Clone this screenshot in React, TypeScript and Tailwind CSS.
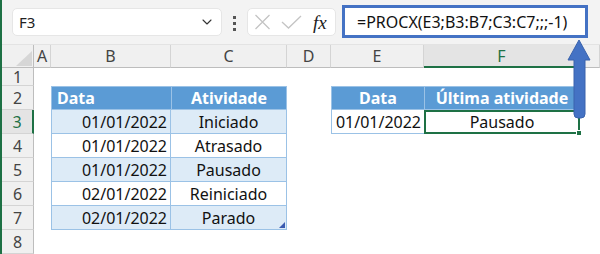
import { ChevronDown } from 'lucide-react';

const font = { fontFamily: '"Noto Sans", "Open Sans", sans-serif' };

const cols = ['A', 'B', 'C', 'D', 'E', 'F', ''];

const rows1 = [
  { date: '01/01/2022', act: 'Iniciado' },
  { date: '01/01/2022', act: 'Atrasado' },
  { date: '01/01/2022', act: 'Pausado' },
  { date: '02/01/2022', act: 'Reiniciado' },
  { date: '02/01/2022', act: 'Parado' },
];

const ColHead = ({ label }: { label: string }) => {
  const sel = label === 'F';
  return (
    <div
      className={
        'flex items-center justify-center border-r border-[#d4d4d4] text-[16px] ' +
        (sel
          ? 'bg-[#e4e4e4] text-[#1e7145] border-b-2 border-b-[#1e7145]'
          : 'bg-[#f0f0f0] text-[#444] border-b border-b-[#bdbdbd]')
      }
    >
      {label}
    </div>
  );
};

const RowHead = ({ n }: { n: number }) => {
  const sel = n === 3;
  return (
    <div
      className={
        'flex items-center justify-center border-b border-[#d4d4d4] text-[16px] leading-none ' +
        (sel
          ? 'bg-[#e4e4e4] text-[#1e7145] border-r-2 border-r-[#1e7145]'
          : 'bg-[#f0f0f0] text-[#444] border-r border-r-[#bdbdbd]')
      }
    >
      {n}
    </div>
  );
};

const Blank = () => <div className="bg-white" />;

export default function App() {
  return (
    <div
      className="relative w-[600px] h-[254px] overflow-hidden bg-white border-l-2 border-[#1e7145] text-black"
      style={font}
    >
      {/* toolbar */}
      <div className="h-[45px] bg-[#f3f3f3] flex items-start border-b border-[#e3e3e3]">
        <div className="mt-[8px] ml-[10px] w-[210px] h-[28px] bg-white rounded-[5px] border border-[#e6e6e6] flex items-center justify-between pl-[6px] pr-[6px]">
          <span className="text-[15px] text-[#222]">F3</span>
          <ChevronDown size={16} strokeWidth={1.6} color="#333" />
        </div>
        <div className="mt-[16px] ml-[11px] flex flex-col gap-[3px]">
          <div className="w-[3px] h-[3px] bg-[#555]" />
          <div className="w-[3px] h-[3px] bg-[#555]" />
          <div className="w-[3px] h-[3px] bg-[#555]" />
        </div>
        <div className="mt-[8px] ml-[11px] w-[89px] h-[28px] bg-white rounded-[5px] border border-[#e6e6e6] flex items-center pl-[6px]">
          <svg width="17" height="16" viewBox="0 0 17 16" className="mr-[10px]">
            <path d="M1.5 1 L15.5 15 M15.5 1 L1.5 15" stroke="#c4c4c4" strokeWidth="1.3" fill="none" />
          </svg>
          <svg width="21" height="14" viewBox="0 0 21 14" className="mr-[11px]">
            <path d="M1 7 L7.5 13 L20 1" stroke="#c4c4c4" strokeWidth="1.3" fill="none" />
          </svg>
          <span
            className="italic text-[19px] leading-none text-[#222]"
            style={{ fontFamily: '"Liberation Serif", "DejaVu Serif", serif' }}
          >
            fx
          </span>
        </div>
        <div className="mt-[5px] ml-[6px] w-[246px] h-[33px] bg-white border-[3px] border-[#4472c4] flex items-center pl-[12px]">
          <span className="text-[16px] text-[#111] whitespace-nowrap">=PROCX(E3;B3:B7;C3:C7;;;-1)</span>
        </div>
      </div>

      {/* sheet */}
      <div className="grid grid-cols-[32px_17px_120px_116px_44px_93px_156px_1fr] grid-rows-[23px_18px_repeat(7,24px)] text-[16px]">
        {/* header row */}
        <div className="relative bg-[#f0f0f0] border-r border-b border-[#bdbdbd]">
          <svg width="32" height="23" className="absolute left-0 top-0">
            <polygon points="14,21 30,21 30,6" fill="#d6d6d6" />
          </svg>
        </div>
        {cols.map((c, i) => (
          <ColHead key={'c' + i} label={c} />
        ))}

        {/* row 1 */}
        <RowHead n={1} />
        {cols.map((c, i) => (
          <Blank key={'r1' + i} />
        ))}

        {/* row 2 */}
        <RowHead n={2} />
        <Blank />
        <div className="bg-[#5b9bd5] border border-[#9bc2e6] border-r-0 flex items-center pl-[5px] font-bold text-white">
          Data
        </div>
        <div className="bg-[#5b9bd5] border border-[#9bc2e6] flex items-center justify-center font-bold text-white">
          Atividade
        </div>
        <Blank />
        <div className="bg-[#5b9bd5] border border-[#9bc2e6] border-r-0 flex items-center justify-center font-bold text-white">
          Data
        </div>
        <div className="bg-[#5b9bd5] border border-[#9bc2e6] flex items-center justify-center font-bold text-white">
          Última atividade
        </div>
        <Blank />

        {rows1.map((r, i) => {
          const n = i + 3;
          const bg = i % 2 === 0 ? 'bg-[#ddebf7]' : 'bg-white';
          return [
            <RowHead key={'h' + n} n={n} />,
            <Blank key={'a' + n} />,
            <div
              key={'b' + n}
              className={bg + ' border-l border-b border-r border-[#9bc2e6] flex items-center justify-end pr-[3px] text-[#111]'}
            >
              {r.date}
            </div>,
            <div
              key={'c' + n}
              className={bg + ' relative border-b border-r border-[#9bc2e6] flex items-center justify-center text-[#111]'}
            >
              {r.act}
              {n === 7 && (
                <svg width="6" height="6" className="absolute right-[1px] bottom-[1px]">
                  <polygon points="6,0 6,6 0,6" fill="#3b5bb0" />
                </svg>
              )}
            </div>,
            <Blank key={'d' + n} />,
            n === 3 ? (
              <div
                key={'e' + n}
                className="bg-white border-l border-b border-[#9bc2e6] flex items-center justify-end pr-[3px] text-[#111]"
              >
                01/01/2022
              </div>
            ) : (
              <Blank key={'e' + n} />
            ),
            n === 3 ? (
              <div
                key={'f' + n}
                className="relative bg-white border-2 border-[#1e7145] flex items-center justify-center text-[#111]"
              >
                Pausado
                <div className="absolute -right-[4px] -bottom-[4px] w-[6px] h-[6px] bg-[#1e7145] border border-white" />
              </div>
            ) : (
              <Blank key={'f' + n} />
            ),
            <Blank key={'g' + n} />,
          ];
        })}

        {/* row 8 */}
        <RowHead n={8} />
        {cols.map((c, i) => (
          <Blank key={'r8' + i} />
        ))}
      </div>

      {/* arrow pointing at the formula */}
      <svg width="30" height="84" viewBox="0 0 30 84" className="absolute left-[563px] top-[38px]">
        <path
          d="M14 2 L25 22 L20 22 L20 76 Q20 80 16 80 L13 80 Q9 80 9 76 L9 22 L3 22 Z"
          fill="#4472c4"
          stroke="#3a63ad"
          strokeWidth="1"
        />
      </svg>
    </div>
  );
}
